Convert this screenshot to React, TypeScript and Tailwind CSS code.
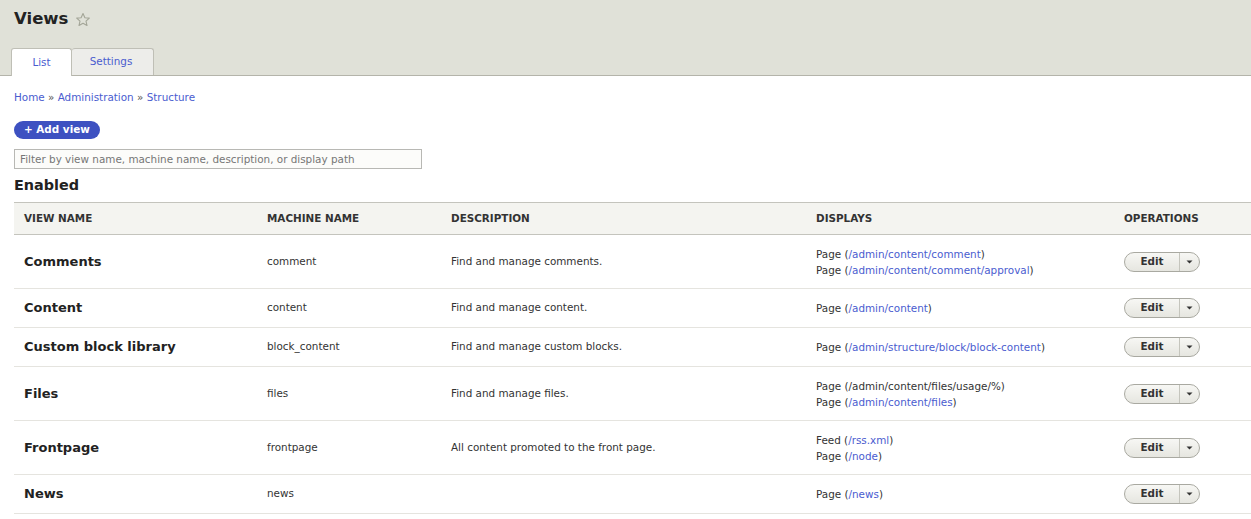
import React from "react";

type Display = { label: string; path: string; linked: boolean };
type ViewRow = {
  name: string;
  machine: string;
  description: string;
  displays: Display[];
};

const views: ViewRow[] = [
  {
    name: "Comments",
    machine: "comment",
    description: "Find and manage comments.",
    displays: [
      { label: "Page", path: "/admin/content/comment", linked: true },
      { label: "Page", path: "/admin/content/comment/approval", linked: true },
    ],
  },
  {
    name: "Content",
    machine: "content",
    description: "Find and manage content.",
    displays: [{ label: "Page", path: "/admin/content", linked: true }],
  },
  {
    name: "Custom block library",
    machine: "block_content",
    description: "Find and manage custom blocks.",
    displays: [{ label: "Page", path: "/admin/structure/block/block-content", linked: true }],
  },
  {
    name: "Files",
    machine: "files",
    description: "Find and manage files.",
    displays: [
      { label: "Page", path: "/admin/content/files/usage/%", linked: false },
      { label: "Page", path: "/admin/content/files", linked: true },
    ],
  },
  {
    name: "Frontpage",
    machine: "frontpage",
    description: "All content promoted to the front page.",
    displays: [
      { label: "Feed", path: "/rss.xml", linked: true },
      { label: "Page", path: "/node", linked: true },
    ],
  },
  {
    name: "News",
    machine: "news",
    description: "",
    displays: [{ label: "Page", path: "/news", linked: true }],
  },
];

const cols = "grid grid-cols-[243px_184px_365px_308px_1fr] items-center";

function StarIcon() {
  return (
    <svg width="16" height="16" viewBox="0 0 16 16" className="mt-[2px]">
      <path
        d="M8 1.6l1.9 4.1 4.4.4-3.3 3 1 4.4L8 11.2l-4 2.3 1-4.4-3.3-3 4.4-.4z"
        fill="none"
        stroke="#a3a597"
        strokeWidth="1.1"
        strokeLinejoin="round"
      />
    </svg>
  );
}

function Dropbutton() {
  return (
    <div className="flex h-[20px] w-[76px] items-stretch rounded-full border border-[#a9a9a1] bg-gradient-to-b from-[#f7f7f4] to-[#e6e6e0] text-[10.4px] font-bold text-[#333]">
      <span className="flex w-[54px] items-center justify-center">Edit</span>
      <span className="flex flex-1 items-center justify-center border-l border-[#c5c5bd]">
        <svg width="7" height="4" viewBox="0 0 7 4">
          <path d="M0.5 0.5h6L3.5 3.5z" fill="#333" />
        </svg>
      </span>
    </div>
  );
}

export default function App() {
  return (
    <div className="min-h-screen bg-white font-['DejaVu_Sans',Verdana,sans-serif] text-[#222]">
      {/* page header with title and primary tabs */}
      <header className="border-b border-[#b4b4aa] bg-[#e0e1d8] pt-[7px]">
        <div className="flex items-center gap-[7px] pl-[14px]">
          <h1 className="text-[16.5px] font-bold leading-[24px] text-[#222]">Views</h1>
          <StarIcon />
        </div>
        <nav className="mt-[17px] flex pl-[11px] text-[10.4px]">
          <a className="-mb-px flex h-[28px] w-[61px] items-center justify-center rounded-t-[3px] border border-b-0 border-[#bfbfb6] bg-white text-[#4a5ccf]">
            List
          </a>
          <a className="flex h-[27px] w-[82px] items-center justify-center rounded-t-[3px] border border-b-0 border-l-0 border-[#bfbfb6] bg-[#ededea] pr-[3px] text-[#4a5ccf]">
            Settings
          </a>
        </nav>
      </header>

      <main className="pl-[14px]">
        <div className="mt-[14px] text-[10.4px] leading-[15px] text-[#4a5ccf]">
          <a>Home</a> <span className="text-[#555]">»</span> <a>Administration</a>{" "}
          <span className="text-[#555]">»</span> <a>Structure</a>
        </div>

        <button className="mt-[16px] flex h-[18px] items-center rounded-full bg-[#3d51c1] px-[10px] text-[10.4px] font-bold text-white">
          + Add view
        </button>

        <input
          className="mt-[10px] block h-[20px] w-[408px] border border-[#b8b8b4] bg-[#fcfcfa] px-[5px] text-[10.4px] text-[#222] placeholder:text-[#767676] outline-none"
          placeholder="Filter by view name, machine name, description, or display path"
        />

        <h2 className="mt-[7px] text-[14.4px] font-bold leading-[19px] text-[#222]">Enabled</h2>

        {/* enabled views listing */}
        <div className="mt-[7px]">
          <div
            className={`${cols} h-[33px] border-y border-[#c4c4bd] bg-[#f4f4f0] text-[10.4px] font-bold uppercase text-[#333]`}
          >
            <div className="pl-[10px]">View name</div>
            <div className="pl-[10px]">Machine name</div>
            <div className="pl-[10px]">Description</div>
            <div className="pl-[10px]">Displays</div>
            <div className="pl-[10px]">Operations</div>
          </div>

          {views.map((v) => (
            <div
              key={v.machine}
              className={`${cols} border-b border-[#e5e4df] ${
                v.displays.length > 1 ? "h-[54px]" : "h-[39px]"
              }`}
            >
              <div className="pl-[10px] text-[13px] font-bold text-[#222]">{v.name}</div>
              <div className="pl-[10px] text-[10.4px] text-[#333]">{v.machine}</div>
              <div className="pl-[10px] text-[10.4px] text-[#333]">{v.description}</div>
              <div className="pl-[10px] text-[10.4px] leading-[16px] text-[#333]">
                {v.displays.map((d, i) => (
                  <div key={i}>
                    {d.label} (
                    {d.linked ? <a className="text-[#4a5ccf]">{d.path}</a> : d.path})
                  </div>
                ))}
              </div>
              <div className="pl-[10px]">
                <Dropbutton />
              </div>
            </div>
          ))}
        </div>
      </main>
    </div>
  );
}
